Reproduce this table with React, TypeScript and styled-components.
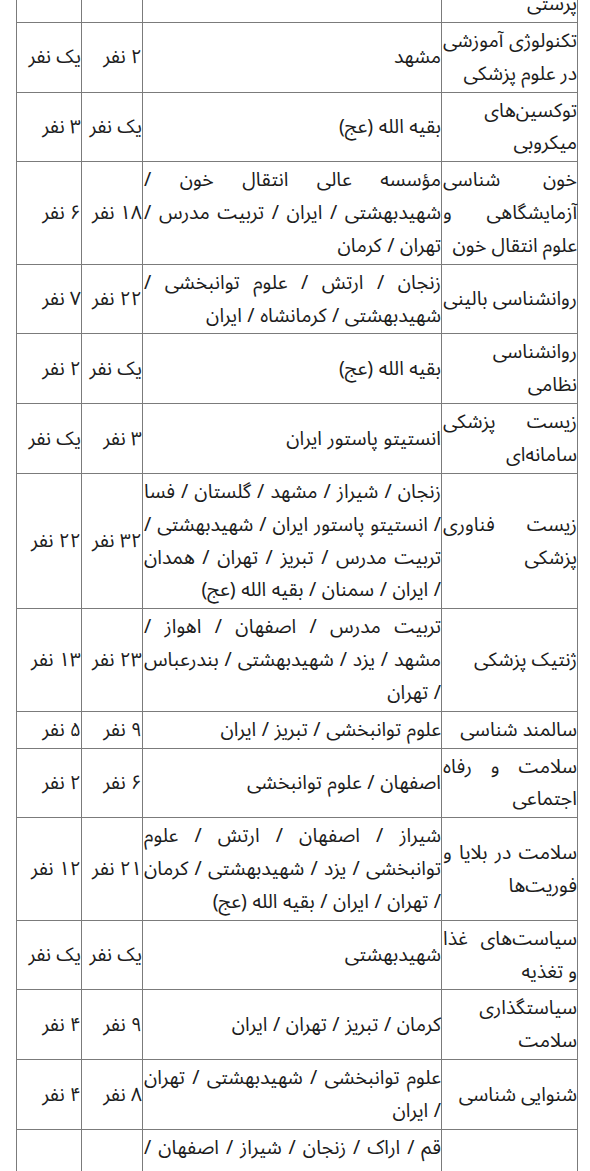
import React from "react";
import styled, { createGlobalStyle } from "styled-components";

const Global = createGlobalStyle`
  html, body {
    margin: 0;
    padding: 0;
    background: #ffffff;
    overflow: hidden;
  }
  body {
    font-family: "Noto Sans Arabic", "DejaVu Sans", sans-serif;
    color: #1c1c1c;
  }
`;

const Page = styled.div`
  width: 590px;
  height: 1171px;
  overflow: hidden;
  box-sizing: border-box;
  padding: 0 12px 0 16px;
  direction: rtl;
`;

const Table = styled.table`
  width: 562px;
  margin-top: -15px;
  border-collapse: collapse;
  table-layout: fixed;
  direction: rtl;
`;

const Col = styled.col<{ $w: number }>`
  width: ${(p) => p.$w}px;
`;

const Cell = styled.td<{ $align?: "justify" | "start"; $ws?: number }>`
  border: 1px solid #7b7b7b;
  padding: 2px 0 1px 1px;
  vertical-align: middle;
  font-size: 19.5px;
  line-height: 32.85px;
  word-spacing: ${(p) => p.$ws ?? 0}px;
  text-align: ${(p) => (p.$align === "start" ? "right" : "justify")};
  text-align-last: right;
  white-space: ${(p) => (p.$align === "start" ? "nowrap" : "normal")};
`;

type RowData = {
  field: string;
  places: string;
  a: string;
  b: string;
};

const Z = "\u200c";
const NB = "\u00a0";

const rows: RowData[] = [
  { field: "پرستی", places: "", a: "", b: "" },
  { field: "تکنولوژی آموزشی در علوم پزشکی", places: "مشهد", a: "۲ نفر", b: "یک نفر" },
  { field: `توکسین${Z}های میکروبی`, places: "بقیه الله (عج)", a: "یک نفر", b: "۳ نفر" },
  {
    field: "خون شناسی آزمایشگاهی و علوم انتقال خون",
    places: "مؤسسه عالی انتقال خون / شهیدبهشتی / ایران / تربیت مدرس / تهران / کرمان",
    a: "۱۸ نفر",
    b: "۶ نفر",
  },
  {
    field: "روانشناسی بالینی",
    places: "زنجان / ارتش / علوم توانبخشی / شهیدبهشتی / کرمانشاه / ایران",
    a: "۲۲ نفر",
    b: "۷ نفر",
  },
  { field: "روانشناسی نظامی", places: "بقیه الله (عج)", a: "یک نفر", b: "۲ نفر" },
  { field: `زیست پزشکی سامانه${Z}ای`, places: "انستیتو پاستور ایران", a: "۳ نفر", b: "یک نفر" },
  {
    field: "زیست فناوری پزشکی",
    places: `زنجان / شیراز / مشهد / گلستان / فسا / انستیتو پاستور ایران / شهیدبهشتی / تربیت مدرس / تبریز / تهران / همدان /${NB}ایران / سمنان / بقیه الله (عج)`,
    a: "۳۲ نفر",
    b: "۲۲ نفر",
  },
  {
    field: "ژنتیک پزشکی",
    places: "تربیت مدرس / اصفهان / اهواز / مشهد / یزد / شهیدبهشتی / بندرعباس / تهران",
    a: "۲۳ نفر",
    b: "۱۳ نفر",
  },
  { field: "سالمند شناسی", places: "علوم توانبخشی / تبریز / ایران", a: "۹ نفر", b: "۵ نفر" },
  { field: "سلامت و رفاه اجتماعی", places: "اصفهان / علوم توانبخشی", a: "۶ نفر", b: "۲ نفر" },
  {
    field: `سلامت در بلایا و فوریت${Z}ها`,
    places:
      "شیراز / اصفهان / ارتش / علوم توانبخشی / یزد / شهیدبهشتی / کرمان / تهران / ایران / بقیه الله (عج)",
    a: "۲۱ نفر",
    b: "۱۲ نفر",
  },
  { field: `سیاست${Z}های غذا و تغذیه`, places: "شهیدبهشتی", a: "یک نفر", b: "یک نفر" },
  { field: "سیاستگذاری سلامت", places: "کرمان / تبریز / تهران / ایران", a: "۹ نفر", b: "۴ نفر" },
  {
    field: "شنوایی شناسی",
    places: "علوم توانبخشی / شهیدبهشتی / تهران / ایران",
    a: "۸ نفر",
    b: "۴ نفر",
  },
  {
    field: "",
    places: "قم / اراک / زنجان / شیراز / اصفهان / تبریز / مشهد / کرمان / یزد / همدان",
    a: "",
    b: "",
  },
];

export default function App() {
  return (
    <>
      <Global />
      <Page>
        <Table>
          <colgroup>
            <Col $w={136} />
            <Col $w={299} />
            <Col $w={61} />
            <Col $w={65} />
          </colgroup>
          <tbody>
            {rows.map((r, i) => (
              <tr key={i}>
                <Cell>{r.field}</Cell>
                <Cell $ws={0.5}>{r.places}</Cell>
                <Cell $align="start">{r.a}</Cell>
                <Cell $align="start">{r.b}</Cell>
              </tr>
            ))}
          </tbody>
        </Table>
      </Page>
    </>
  );
}
